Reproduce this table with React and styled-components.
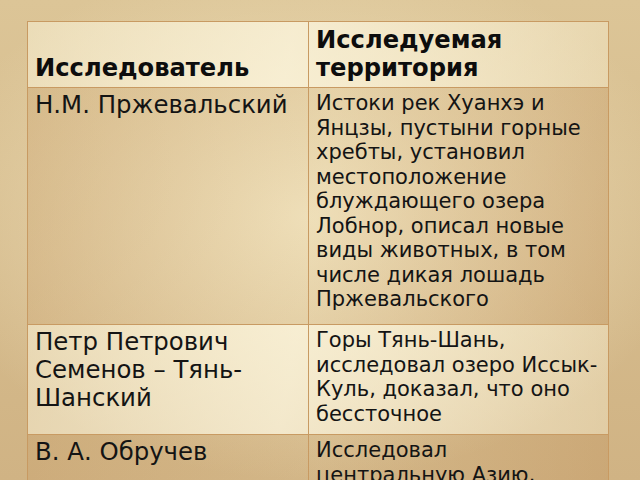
import styled, { createGlobalStyle } from "styled-components";

const GlobalStyle = createGlobalStyle`
    html, body {
        margin: 0;
        padding: 0;
        height: 100%;
        overflow: hidden;
    }
    body {
        background:
            radial-gradient(ellipse 60% 55% at 48% 45%, #f0e2bd 0%, rgba(240, 226, 189, 0) 100%),
            linear-gradient(180deg, #dcc597 0%, #d0b384 100%);
        font-family: "DejaVu Sans", "Liberation Sans", sans-serif;
        color: #111;
    }
`;

const Page = styled.main`
    width: 640px;
    height: 480px;
    padding: 21px 0 0 27px;
    box-sizing: border-box;
    overflow: hidden;
`;

const Table = styled.table`
    border-collapse: collapse;
    table-layout: fixed;
    width: 581px;
    border: 1px solid #c89a62;
`;

const Row = styled.tr`
    height: ${(p) => p.$h}px;
    background: ${(p) =>
        p.$light
            ? "linear-gradient(100deg, rgba(255, 250, 225, 0.45) 0%, rgba(255, 250, 228, 0.7) 45%, rgba(255, 248, 220, 0.35) 100%)"
            : "linear-gradient(100deg, rgba(196, 150, 95, 0.25) 0%, rgba(230, 205, 160, 0.15) 50%, rgba(190, 140, 85, 0.3) 100%)"};
`;

const HeadCell = styled.th`
    border: 1px solid #c89a62;
    padding: 4px 7px 5px 7px;
    vertical-align: bottom;
    text-align: left;
    font-size: 24.2px;
    line-height: 28px;
    font-weight: bold;
    color: #0d0d0d;
`;

const Cell = styled.td`
    border: 1px solid #c89a62;
    padding: 3px 7px;
    vertical-align: top;
    font-size: ${(p) => (p.$small ? 21 : 24.4)}px;
    line-height: ${(p) => (p.$small ? 24.5 : 28)}px;
    color: #141414;
`;

const rows = [
    {
        name: "Н.М. Пржевальский",
        area: "Истоки рек Хуанхэ и Янцзы, пустыни горные хребты, установил местоположение блуждающего озера Лобнор, описал новые виды животных, в том числе дикая лошадь Пржевальского",
        h: 237,
    },
    {
        name: "Петр Петрович Семенов – Тянь-Шанский",
        area: "Горы Тянь-Шань, исследовал озеро Иссык-Куль, доказал, что оно бессточное",
        h: 110,
        light: true,
    },
    {
        name: "В. А. Обручев",
        area: "Исследовал центральную Азию,",
        h: 80,
    },
];

export default function App() {
    return (
        <>
            <GlobalStyle />
            <Page>
                <Table>
                    <colgroup>
                        <col style={{ width: 281 }} />
                        <col style={{ width: 300 }} />
                    </colgroup>
                    <thead>
                        <Row $h={66} $light>
                            <HeadCell>Исследователь</HeadCell>
                            <HeadCell>Исследуемая территория</HeadCell>
                        </Row>
                    </thead>
                    <tbody>
                        {rows.map((r) => (
                            <Row key={r.name} $h={r.h} $light={r.light}>
                                <Cell>{r.name}</Cell>
                                <Cell $small>{r.area}</Cell>
                            </Row>
                        ))}
                    </tbody>
                </Table>
            </Page>
        </>
    );
}
